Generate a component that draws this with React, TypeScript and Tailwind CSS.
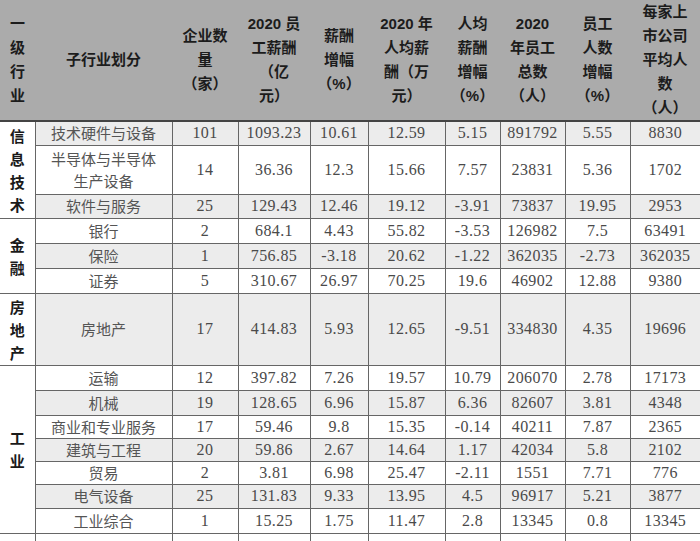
type Row = {
  sub: string[];
  values: string[];
  height: string;
  shaded: boolean;
};

type Group = {
  label: string[];
  rows: Row[];
};

const groups: Group[] = [
  {
    label: ["信", "息", "技", "术"],
    rows: [
      { sub: ["技术硬件与设备"], values: ["101", "1093.23", "10.61", "12.59", "5.15", "891792", "5.55", "8830"], height: "h-[24px]", shaded: true },
      { sub: ["半导体与半导体", "生产设备"], values: ["14", "36.36", "12.3", "15.66", "7.57", "23831", "5.36", "1702"], height: "h-[49px]", shaded: false },
      { sub: ["软件与服务"], values: ["25", "129.43", "12.46", "19.12", "-3.91", "73837", "19.95", "2953"], height: "h-[24px]", shaded: true },
    ],
  },
  {
    label: ["金", "融"],
    rows: [
      { sub: ["银行"], values: ["2", "684.1", "4.43", "55.82", "-3.53", "126982", "7.5", "63491"], height: "h-[25px]", shaded: false },
      { sub: ["保险"], values: ["1", "756.85", "-3.18", "20.62", "-1.22", "362035", "-2.73", "362035"], height: "h-[25px]", shaded: true },
      { sub: ["证券"], values: ["5", "310.67", "26.97", "70.25", "19.6", "46902", "12.88", "9380"], height: "h-[25px]", shaded: false },
    ],
  },
  {
    label: ["房", "地", "产"],
    rows: [
      { sub: ["房地产"], values: ["17", "414.83", "5.93", "12.65", "-9.51", "334830", "4.35", "19696"], height: "h-[72px]", shaded: true },
    ],
  },
  {
    label: ["工", "业"],
    rows: [
      { sub: ["运输"], values: ["12", "397.82", "7.26", "19.57", "10.79", "206070", "2.78", "17173"], height: "h-[25px]", shaded: false },
      { sub: ["机械"], values: ["19", "128.65", "6.96", "15.87", "6.36", "82607", "3.81", "4348"], height: "h-[25px]", shaded: true },
      { sub: ["商业和专业服务"], values: ["17", "59.46", "9.8", "15.35", "-0.14", "40211", "7.87", "2365"], height: "h-[23px]", shaded: false },
      { sub: ["建筑与工程"], values: ["20", "59.86", "2.67", "14.64", "1.17", "42034", "5.8", "2102"], height: "h-[23px]", shaded: true },
      { sub: ["贸易"], values: ["2", "3.81", "6.98", "25.47", "-2.11", "1551", "7.71", "776"], height: "h-[23px]", shaded: false },
      { sub: ["电气设备"], values: ["25", "131.83", "9.33", "13.95", "4.5", "96917", "5.21", "3877"], height: "h-[24px]", shaded: true },
      { sub: ["工业综合"], values: ["1", "15.25", "1.75", "11.47", "2.8", "13345", "0.8", "13345"], height: "h-[25px]", shaded: false },
    ],
  },
];

const headers: string[][] = [
  ["一", "级", "行", "业"],
  ["子行业划分"],
  ["企业数", "量", "（家）"],
  ["2020 员", "工薪酬", "（亿", "元）"],
  ["薪酬", "增幅", "（%）"],
  ["2020 年", "人均薪", "酬（万", "元）"],
  ["人均", "薪酬", "增幅", "（%）"],
  ["2020", "年员工", "总数", "（人）"],
  ["员工", "人数", "增幅", "（%）"],
  ["每家上", "市公司", "平均人", "数", "（人）"],
];

const widths = ["w-[35px]", "w-[137px]", "w-[66px]", "w-[72px]", "w-[58px]", "w-[77px]", "w-[55px]", "w-[65px]", "w-[65px]", "w-[70px]"];

function Lines({ lines }: { lines: string[] }) {
  return (
    <>
      {lines.map((line, i) => (
        <div key={i}>{line}</div>
      ))}
    </>
  );
}

export default function App() {
  return (
    <div className="w-[700px] bg-white font-['Noto_Sans_CJK_SC',sans-serif]">
      <table className="w-[700px] table-fixed border-collapse">
        <colgroup>
          {widths.map((w, i) => (
            <col key={i} className={w} />
          ))}
        </colgroup>
        <thead>
          <tr className="h-[118px]">
            {headers.map((lines, i) => (
              <th
                key={i}
                className="border-b-2 border-[#444] bg-[#ababab] p-0 text-center align-middle font-['Liberation_Sans','Noto_Sans_CJK_SC',sans-serif] text-[15px] leading-[24px] font-bold whitespace-nowrap text-[#1c1c1c]"
              >
                <Lines lines={lines} />
              </th>
            ))}
          </tr>
        </thead>
        <tbody>
          {groups.map((group) =>
            group.rows.map((row, ri) => (
              <tr key={group.label.join("") + ri} className={row.height}>
                {ri === 0 && (
                  <td
                    rowSpan={group.rows.length}
                    className="border-r border-b border-[#666] bg-white p-0 text-center align-middle text-[15px] leading-[23px] font-bold text-[#1a1a1a]"
                  >
                    <Lines lines={group.label} />
                  </td>
                )}
                <td
                  className={`border-r border-b border-[#666] p-0 text-center align-middle text-[15px] leading-[22px] whitespace-nowrap text-[#555] ${
                    row.shaded ? "bg-[#ececec]" : "bg-white"
                  }`}
                >
                  <Lines lines={row.sub} />
                </td>
                {row.values.map((v, vi) => (
                  <td
                    key={vi}
                    className={`border-b border-[#666] p-0 text-center align-middle font-['Liberation_Serif',serif] text-[16px] leading-[18px] tracking-[0.4px] whitespace-nowrap text-[#4a4a4a] ${
                      vi === row.values.length - 1 ? "" : "border-r"
                    } ${row.shaded ? "bg-[#ececec]" : "bg-white"}`}
                  >
                    {v}
                  </td>
                ))}
              </tr>
            ))
          )}
          <tr className="h-[24px]">
            {widths.map((_, i) => (
              <td key={i} className={`border-[#666] p-0 ${i === widths.length - 1 ? "" : "border-r"}`} />
            ))}
          </tr>
        </tbody>
      </table>
    </div>
  );
}
